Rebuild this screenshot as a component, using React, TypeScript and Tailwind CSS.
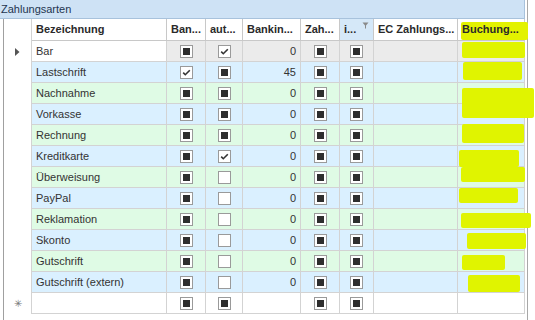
import React from "react";

type CB = "ind" | "chk" | "off";
type Row = {
  name: string;
  ban: CB;
  aut: CB;
  bank: string;
  bg: "sel" | "blue" | "green" | "new";
  hl?: { l: number; t: number; w: number; h: number };
};

const rows: Row[] = [
  { name: "Bar", ban: "ind", aut: "chk", bank: "0", bg: "sel", hl: { l: 4, t: 1, w: 63, h: 16 } },
  { name: "Lastschrift", ban: "chk", aut: "ind", bank: "45", bg: "blue", hl: { l: 5, t: 0, w: 59, h: 18 } },
  { name: "Nachnahme", ban: "ind", aut: "ind", bank: "0", bg: "green", hl: { l: 4, t: 5, w: 72, h: 30 } },
  { name: "Vorkasse", ban: "ind", aut: "ind", bank: "0", bg: "blue" },
  { name: "Rechnung", ban: "ind", aut: "ind", bank: "0", bg: "green", hl: { l: 4, t: -1, w: 62, h: 19 } },
  { name: "Kreditkarte", ban: "ind", aut: "chk", bank: "0", bg: "blue", hl: { l: 1, t: 4, w: 60, h: 17 } },
  { name: "Überweisung", ban: "ind", aut: "off", bank: "0", bg: "green", hl: { l: 3, t: 0, w: 64, h: 15 } },
  { name: "PayPal", ban: "ind", aut: "off", bank: "0", bg: "blue", hl: { l: 1, t: 0, w: 59, h: 15 } },
  { name: "Reklamation", ban: "ind", aut: "off", bank: "0", bg: "green", hl: { l: 3, t: 4, w: 70, h: 15 } },
  { name: "Skonto", ban: "ind", aut: "off", bank: "0", bg: "blue", hl: { l: 9, t: 3, w: 59, h: 16 } },
  { name: "Gutschrift", ban: "ind", aut: "off", bank: "0", bg: "green", hl: { l: 4, t: 4, w: 43, h: 15 } },
  { name: "Gutschrift (extern)", ban: "ind", aut: "off", bank: "0", bg: "blue", hl: { l: 10, t: 3, w: 52, h: 17 } },
  { name: "", ban: "ind", aut: "ind", bank: "", bg: "new" },
];

function Check({ s }: { s: CB }) {
  return (
    <div className="w-[13px] h-[13px] border border-[#9a9a9a] bg-white flex items-center justify-center">
      {s === "ind" && <div className="w-[7px] h-[7px] bg-[#2e2e2e]" />}
      {s === "chk" && (
        <svg width="11" height="11" viewBox="0 0 11 11">
          <path d="M2.2 5.6 L4.3 7.7 L8.8 3.2" fill="none" stroke="#333" strokeWidth="1.6" />
        </svg>
      )}
    </div>
  );
}

const bgOf = (b: Row["bg"]) =>
  b === "sel" ? "bg-[#ebebeb]" : b === "blue" ? "bg-[#daf0ff]" : b === "green" ? "bg-[#dffbe5]" : "bg-white";

const cell = "border-r border-b border-[#d3d3d3] h-[21px] flex items-center";
const hcell =
  "border-r border-b border-[#c8c8c8] h-[22px] flex items-center px-[4px] font-bold text-[#2a2a2a] whitespace-nowrap overflow-hidden";

export default function App() {
  return (
    <div
      className="w-[535px] h-[320px] bg-white flex overflow-hidden text-[11px] text-[#333]"
      style={{ fontFamily: '"Liberation Sans", Arial, sans-serif' }}
    >
      <div className="w-[527px] flex flex-col">
        <div className="h-[19px] w-[525px] bg-[#cee2f5] border-b border-r border-[#a8c2dc] flex items-center pl-[1px] text-[#1f3550]">
          Zahlungsarten
        </div>
        <div className="flex flex-1">
          <div className="w-[3px]" />
          <div className="border-l border-[#a0a0a0] flex-1">
            <div className="grid grid-cols-[28px_135px_39px_37px_58px_39px_34px_84px_67px]">
              <div className="h-[22px] border-r border-[#d3d3d3] bg-white" />
              <div className={hcell}>Bezeichnung</div>
              <div className={hcell}>Ban...</div>
              <div className={hcell}>aut...</div>
              <div className={hcell}>Bankin...</div>
              <div className={hcell}>Zah...</div>
              <div className={`${hcell} bg-[#d5e8f8] relative`}>
                i...
                <svg className="absolute right-[4px] top-[3px]" width="7" height="7" viewBox="0 0 7 7">
                  <path d="M0.5 0.5 H6.5 L4 3.5 V6.5 H3 V3.5 Z" fill="#8a8a8a" />
                </svg>
              </div>
              <div className={hcell}>EC Zahlungs...</div>
              <div className="border-r border-b border-[#c8c8c8] h-[22px] flex items-center px-[4px] font-bold text-[#2a2a2a] whitespace-nowrap relative">
                <div className="absolute left-[3px] top-[3px] w-[67px] h-[18px] bg-[#e3f200] rounded-[2px] z-10" />
                <span className="relative z-20">Buchung...</span>
              </div>

              {rows.map((r, i) => (
                <React.Fragment key={i}>
                  <div className="h-[21px] border-r border-[#d3d3d3] bg-white flex items-center justify-center">
                    {r.bg === "sel" && (
                      <svg width="5" height="8" viewBox="0 0 5 8">
                        <path d="M0 0 L4.5 4 L0 8 Z" fill="#555" />
                      </svg>
                    )}
                    {r.bg === "new" && <span className="text-[10px] text-[#777] leading-none">✳</span>}
                  </div>
                  <div className={`${cell} ${r.bg === "sel" ? "bg-white" : bgOf(r.bg)} px-[4px] whitespace-nowrap`}>
                    {r.name}
                  </div>
                  <div className={`${cell} ${bgOf(r.bg)} justify-center`}>
                    <Check s={r.ban} />
                  </div>
                  <div className={`${cell} ${bgOf(r.bg)} justify-center`}>
                    <Check s={r.aut} />
                  </div>
                  <div className={`${cell} ${bgOf(r.bg)} justify-end px-[4px]`}>{r.bank}</div>
                  <div className={`${cell} ${bgOf(r.bg)} justify-center`}>
                    <Check s="ind" />
                  </div>
                  <div className={`${cell} ${bgOf(r.bg)} justify-center`}>
                    <Check s="ind" />
                  </div>
                  <div className={`${cell} ${bgOf(r.bg)}`} />
                  <div className={`${cell} ${bgOf(r.bg)} relative`}>
                    {r.hl && (
                      <div
                        className="absolute bg-[#e0f400] rounded-[2px] z-10"
                        style={{ left: r.hl.l, top: r.hl.t, width: r.hl.w, height: r.hl.h }}
                      />
                    )}
                  </div>
                </React.Fragment>
              ))}
            </div>
          </div>
        </div>
      </div>
      <div className="w-px h-full bg-[#a8a8a8]" />
    </div>
  );
}
